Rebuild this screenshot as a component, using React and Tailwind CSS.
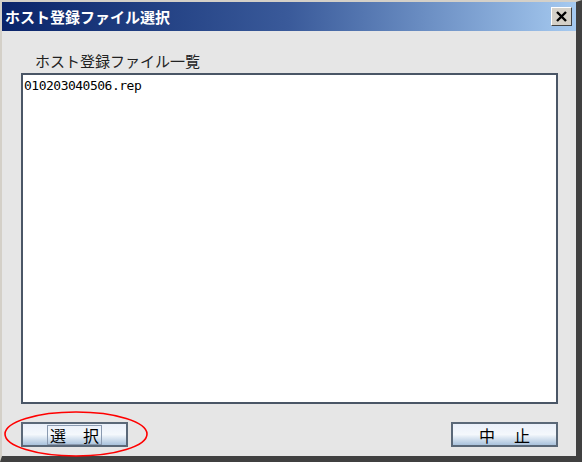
const App = () => {
  return (
    <div className="w-[582px] h-[462px] bg-[#e6e6e6] relative overflow-hidden font-['Noto_Sans_CJK_JP',sans-serif]">
      <div className="w-full h-full border-t-2 border-l-2 border-t-[#d4d0c8] border-l-[#d4d0c8] border-r-[6px] border-r-[#404040] border-b-[6px] border-b-[#404040] flex flex-col">
        <div className="h-[29px] shrink-0 flex items-center justify-between pl-[3px] pr-[4px] bg-gradient-to-r from-[#0a246a] via-[#3a5a9a] to-[#a6caf0]">
          <span className="text-white font-bold text-[15px] leading-none">ホスト登録ファイル選択</span>
          <button className="w-[21px] h-[19px] bg-[#d4d0c8] border border-t-white border-l-white border-r-[#404040] border-b-[#404040] flex items-center justify-center">
            <svg width="13" height="11" viewBox="0 0 13 11">
              <path d="M2 1 L11 10 M11 1 L2 10" stroke="#000" strokeWidth="2.4" />
            </svg>
          </button>
        </div>
        <div className="flex-1 flex flex-col pl-[19px] pr-[18px] pt-[20px]">
          <div className="pl-[14px] text-[15px] leading-[20px] text-[#222]">ホスト登録ファイル一覧</div>
          <div className="mt-[2px] h-[331px] bg-white border-2 border-[#4a5666] pl-[1px] pt-[3px]">
            <div className="font-['DejaVu_Sans_Mono',monospace] text-[13px] leading-[15px] text-black tracking-[-0.5px]">010203040506.rep</div>
          </div>
          <div className="mt-[18px] flex justify-between">
            <button className="w-[107px] h-[25px] border-2 border-[#5a6878] bg-gradient-to-b from-[#eaf0fa] via-[#f4f8fc] to-[#a9c2dc] text-[16px] leading-none text-black flex items-center justify-center">
              <span className="border border-[#8a9ab0] h-[20px] px-[2px] flex items-center gap-[17px]">
                <span>選</span>
                <span>択</span>
              </span>
            </button>
            <button className="w-[107px] h-[25px] border-2 border-[#5a6878] bg-gradient-to-b from-[#eaf0fa] via-[#f4f8fc] to-[#a9c2dc] text-[16px] leading-none text-black flex items-center justify-center gap-[19px]">
              <span>中</span>
              <span>止</span>
            </button>
          </div>
        </div>
      </div>
      <svg className="absolute left-0 top-[405px]" width="160" height="57" viewBox="0 0 160 57">
        <ellipse cx="76" cy="29" rx="71" ry="22" fill="none" stroke="#ff0000" strokeWidth="1.6" />
      </svg>
    </div>
  );
};

export default App;
